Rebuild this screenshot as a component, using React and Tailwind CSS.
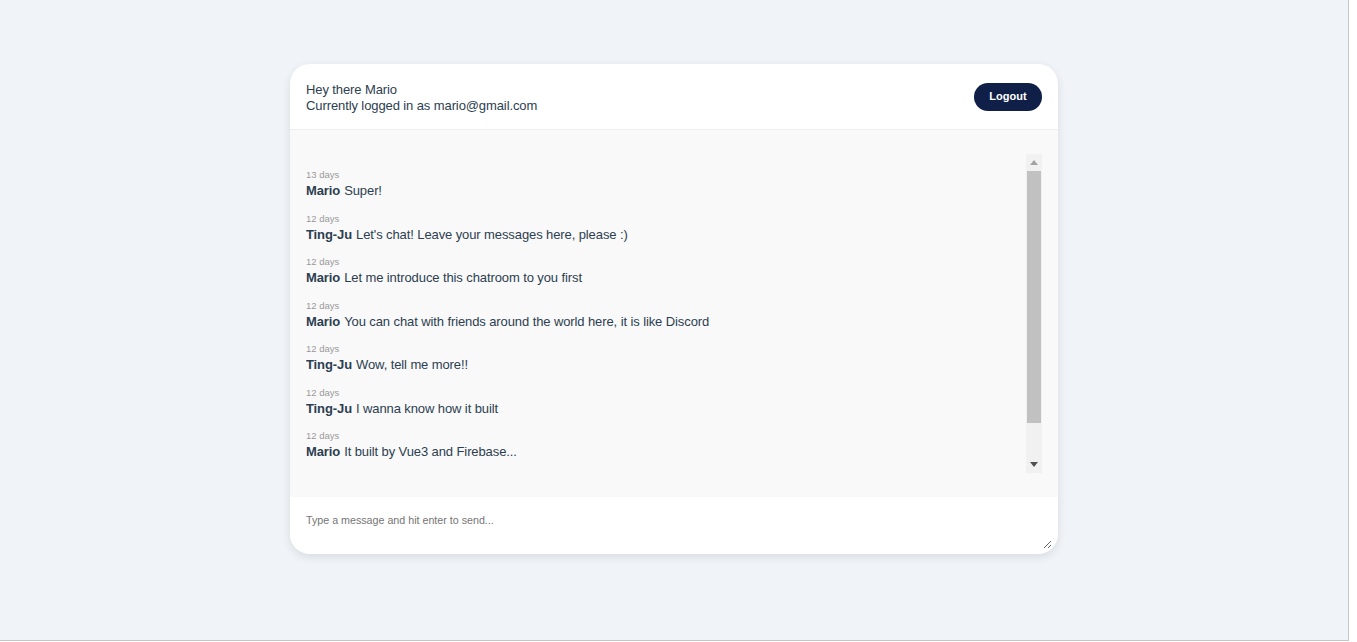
import React from "react";

const messages = [
  { t: "13 days", n: "Mario", m: "Super!" },
  { t: "12 days", n: "Ting-Ju", m: "Let's chat! Leave your messages here, please :)" },
  { t: "12 days", n: "Mario", m: "Let me introduce this chatroom to you first" },
  { t: "12 days", n: "Mario", m: "You can chat with friends around the world here, it is like Discord" },
  { t: "12 days", n: "Ting-Ju", m: "Wow, tell me more!!" },
  { t: "12 days", n: "Ting-Ju", m: "I wanna know how it built" },
  { t: "12 days", n: "Mario", m: "It built by Vue3 and Firebase..." },
];

export default function App() {
  return (
    <div
      className="w-[1357px] h-[642px] bg-white flex"
      style={{ fontFamily: '"Liberation Sans", Arial, sans-serif' }}
    >
      <div className="w-[1349px] h-[641px] bg-[#f0f4f8] border-r border-b border-[#c6c6c6] flex justify-center pt-[64px]">
        <div className="w-[768px] h-[490px] bg-white rounded-[20px] shadow-[0_3px_8px_rgba(40,50,70,0.12)] flex flex-col overflow-hidden">
          <div className="h-[66px] border-b border-[#eeeeee] flex items-center justify-between px-4 shrink-0">
            <div className="text-[13px] leading-[16px] text-[#2c3e50] pt-[3px] tracking-[-0.1px]">
              <p>Hey there Mario</p>
              <p>Currently logged in as mario@gmail.com</p>
            </div>
            <button className="h-[28px] w-[68px] rounded-full bg-[#0f1f48] text-white text-[11px] font-bold">
              Logout
            </button>
          </div>
          <div className="h-[367px] bg-[#f9f9f9] px-4 py-6 shrink-0">
            <div className="h-[319px] flex">
              <div className="flex-1 overflow-hidden pt-[14px] flex flex-col gap-[11.5px]">
                {messages.map((x, i) => (
                  <div key={i} className="shrink-0">
                    <div className="text-[9.5px] leading-[14px] text-[#999999]">{x.t}</div>
                    <div className="text-[13px] leading-[18px] text-[#2c3e50] tracking-[-0.1px]">
                      <span className="font-bold mr-[4px]">{x.n}</span>
                      {x.m}
                    </div>
                  </div>
                ))}
              </div>
              <div className="w-[16px] bg-[#f1f1f1] flex flex-col shrink-0">
                <div className="h-[17px] flex items-center justify-center">
                  <svg width="8" height="5" viewBox="0 0 8 5">
                    <path d="M4 0 L8 5 L0 5 Z" fill="#a3a3a3" />
                  </svg>
                </div>
                <div className="h-[252px] mx-[1px] bg-[#c1c1c1]" />
                <div className="flex-1" />
                <div className="h-[17px] flex items-center justify-center">
                  <svg width="8" height="5" viewBox="0 0 8 5">
                    <path d="M0 0 L8 0 L4 5 Z" fill="#505050" />
                  </svg>
                </div>
              </div>
            </div>
          </div>
          <div className="flex-1 pr-[6px]">
            <textarea
              className="block w-full h-[52px] px-4 pt-[16px] pb-2 text-[10.7px] leading-[14px] text-[#2c3e50] placeholder:text-[#757575] outline-none border-0 resize-y bg-white"
              placeholder="Type a message and hit enter to send..."
            />
          </div>
        </div>
      </div>
    </div>
  );
}
